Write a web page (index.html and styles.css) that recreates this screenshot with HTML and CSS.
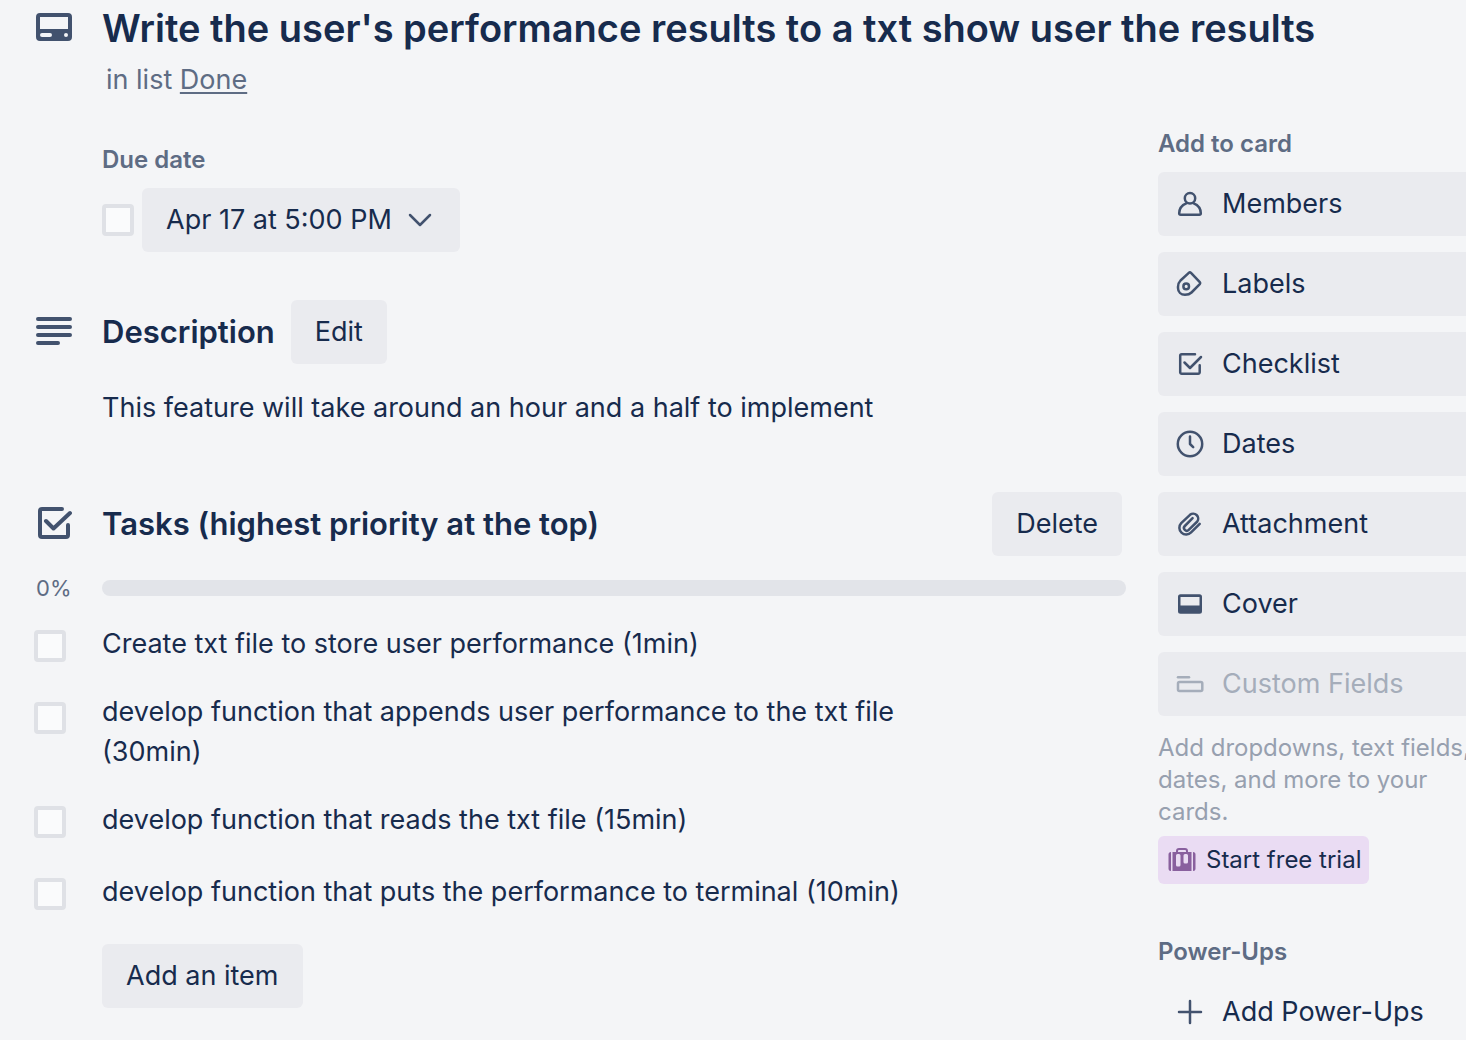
FILE: index.html
```html
<!DOCTYPE html>
<html lang="en">
<head>
<meta charset="utf-8">
<meta name="viewport" content="width=device-width, initial-scale=1">
<title>Write the user's performance results to a txt show user the results</title>
<link rel="stylesheet" href="styles.css">
</head>
<body>
<div class="card">
  <header class="card-header row">
    <svg class="icon-large" viewBox="0 0 36 36" aria-hidden="true">
      <path fill="currentColor" fill-rule="evenodd" d="M4 4h28a4 4 0 0 1 4 4v20a4 4 0 0 1-4 4H4a4 4 0 0 1-4-4V8a4 4 0 0 1 4-4zM4 8v12h28V8zM6 24a2 2 0 0 0 0 4h8a2 2 0 0 0 0-4zM30 24a2 2 0 1 0 0 4a2 2 0 0 0 0-4z"/>
    </svg>
    <div>
      <h1 class="card-title">Write the user's performance results to a txt show user the results</h1>
      <p class="card-list">in list <a href="#done">Done</a></p>
    </div>
  </header>

  <div class="columns">
    <main class="main">
      <section class="due">
        <h2 class="label">Due date</h2>
        <div class="due-row">
          <input class="checkbox" type="checkbox" aria-label="Mark due date complete">
          <button class="button" type="button">Apr 17 at 5:00 PM
            <svg class="chevron" viewBox="0 0 24 24" aria-hidden="true"><path class="stroke" d="M2 7l10 10L22 7"/></svg>
          </button>
        </div>
      </section>

      <section class="description">
        <div class="row row-center">
          <svg class="icon-large" viewBox="0 0 36 36" aria-hidden="true"><path class="stroke thick" d="M2 5h32M2 13h32M2 21h32M2 29h20"/></svg>
          <div class="heading-row">
            <h2 class="heading">Description</h2>
            <button class="button" type="button">Edit</button>
          </div>
        </div>
        <p class="description-text">This feature will take around an hour and a half to implement</p>
      </section>

      <section class="checklist">
        <div class="row row-center">
          <svg class="icon-large" viewBox="0 0 36 36" aria-hidden="true"><path class="stroke thick" d="M26 3H6a2 2 0 0 0-2 2v24a2 2 0 0 0 2 2h24a2 2 0 0 0 2-2V19M10 15l7.500 7.500L34 7"/></svg>
          <div class="heading-row heading-spread">
            <h2 class="heading">Tasks (highest priority at the top)</h2>
            <button class="button" type="button">Delete</button>
          </div>
        </div>
        <div class="row row-center progress">
          <span class="percent">0%</span>
          <div class="progress-bar" role="progressbar" aria-label="Tasks complete" aria-valuenow="0" aria-valuemin="0" aria-valuemax="100"></div>
        </div>
        <ul class="items">
          <li class="item"><input class="checkbox" type="checkbox" id="task-1"><label for="task-1">Create txt file to store user performance (1min)</label></li>
          <li class="item"><input class="checkbox" type="checkbox" id="task-2"><label for="task-2">develop function that appends user performance to the txt file (30min)</label></li>
          <li class="item"><input class="checkbox" type="checkbox" id="task-3"><label for="task-3">develop function that reads the txt file (15min)</label></li>
          <li class="item"><input class="checkbox" type="checkbox" id="task-4"><label for="task-4">develop function that puts the performance to terminal (10min)</label></li>
        </ul>
        <button class="button add-item" type="button">Add an item</button>
      </section>
    </main>

    <aside class="sidebar">
      <h2 class="label">Add to card</h2>
      <div class="actions">
        <button class="action" type="button">
          <svg class="icon" viewBox="0 0 32 32" aria-hidden="true"><circle class="stroke" cx="16" cy="10.300" r="5.200"/><path class="stroke" d="M12.300 15.300C8 17 5.200 20.500 5.200 25.300a1.500 1.500 0 0 0 1.500 1.500h18.600a1.500 1.500 0 0 0 1.500-1.500C26.800 20.500 24 17 19.700 15.300"/></svg>
          Members
        </button>
        <button class="action" type="button">
          <svg class="icon" viewBox="0 0 32 32" aria-hidden="true"><path class="stroke" d="M14.800 4.900L6.500 12.500a9 9 0 0 0-2.500 6.200v1.300C4 24 7 26.800 11 26.800c2.500 0 4.800-.600 6.500-2.300l8.300-8.300a1.500 1.500 0 0 0 0-2L17 4.900a1.600 1.600 0 0 0-2.200 0z"/><circle class="stroke" cx="12.200" cy="18.400" r="2.800"/></svg>
          Labels
        </button>
        <button class="action" type="button">
          <svg class="icon" viewBox="0 0 32 32" aria-hidden="true"><path class="stroke" d="M21 6.300H7.700A1.500 1.500 0 0 0 6.200 7.800v16.500a1.500 1.500 0 0 0 1.500 1.500h16.500a1.500 1.500 0 0 0 1.500-1.500v-7M10.500 14.500l5.500 5.500L27 9"/></svg>
          Checklist
        </button>
        <button class="action" type="button">
          <svg class="icon" viewBox="0 0 32 32" aria-hidden="true"><circle class="stroke" cx="16" cy="16" r="12.200"/><path class="stroke" d="M16 8.500V16l3.200 3.200"/></svg>
          Dates
        </button>
        <button class="action" type="button">
          <svg class="icon" viewBox="0 0 32 32" aria-hidden="true"><path class="stroke" d="M25.700 15.800l-8.600 8.600a6.600 6.600 0 0 1-9.900-9.300l8.800-8.300a5 5 0 0 1 7.300 6.700l-8.600 8.400a2.700 2.700 0 0 1-3.900-3.900l7.800-7.800"/></svg>
          Attachment
        </button>
        <button class="action" type="button">
          <svg class="icon" viewBox="0 0 32 32" aria-hidden="true"><path fill="currentColor" fill-rule="evenodd" d="M6.500 6.300h19A2.500 2.500 0 0 1 28 8.800v14.400a2.500 2.500 0 0 1-2.500 2.500h-19A2.500 2.500 0 0 1 4 23.200V8.800a2.500 2.500 0 0 1 2.500-2.500zM6.500 9v8.500h19V9z"/></svg>
          Cover
        </button>
        <button class="action" type="button" disabled>
          <svg class="icon" viewBox="0 0 32 32" aria-hidden="true"><path class="stroke" d="M4 9.300h11"/><rect class="stroke" x="4" y="14" width="24.300" height="9" rx="1.500"/></svg>
          Custom Fields
        </button>
      </div>
      <p class="hint">Add dropdowns, text fields, dates, and more to your cards.</p>
      <button class="trial" type="button">
        <svg class="trial-icon" viewBox="0 0 28 24" aria-hidden="true">
          <path fill="none" stroke="currentColor" stroke-width="2" d="M9 5V3a2 2 0 0 1 2-2h6a2 2 0 0 1 2 2v2"/>
          <path fill="currentColor" d="M3 4v19a2.500 2.500 0 0 1-2.500-2.500v-14A2.500 2.500 0 0 1 3 4zM25 4v19a2.500 2.500 0 0 0 2.500-2.500v-14A2.500 2.500 0 0 0 25 4z"/>
          <path fill="currentColor" fill-rule="evenodd" d="M4.500 4h19v19h-19zM9.500 6A1.500 1.500 0 0 0 8 7.500V17a1.500 1.500 0 0 0 1.500 1.500h1.500a1.500 1.500 0 0 0 1.500-1.500V7.500A1.500 1.500 0 0 0 11 6zM17 6a1.500 1.500 0 0 0-1.500 1.500V14a1.500 1.500 0 0 0 1.500 1.500h1.500A1.500 1.500 0 0 0 20 14V7.500A1.500 1.500 0 0 0 18.500 6z"/>
        </svg>
        Start free trial
      </button>
      <h2 class="label power-label">Power-Ups</h2>
      <button class="action action-plain" type="button">
        <svg class="icon" viewBox="0 0 32 32" aria-hidden="true"><path class="stroke" d="M16 5v22M5 16h22"/></svg>
        Add Power-Ups
      </button>
    </aside>
  </div>
</div>
</body>
</html>
```
FILE: styles.css
```css
* {
  box-sizing: border-box;
}

body {
  margin: 0;
  background: #f4f5f7;
  color: #172b4d;
  font-family: Inter, "Liberation Sans", sans-serif;
  font-size: 27px;
  line-height: 40px;
  overflow-x: hidden;
}

h1, h2, p, ul {
  margin: 0;
  padding: 0;
}

button {
  font: inherit;
  color: inherit;
  border: 0;
  cursor: pointer;
}

.row {
  display: grid;
  grid-template-columns: 36px minmax(0, 1fr);
  column-gap: 30px;
  padding-left: 36px;
}

.row-center {
  align-items: center;
}

.icon-large {
  width: 36px;
  height: 36px;
  color: #42526e;
}

.stroke {
  fill: none;
  stroke: currentColor;
  stroke-width: 2.5;
  stroke-linecap: round;
  stroke-linejoin: round;
}

.thick {
  stroke-width: 4;
}

.card-header {
  padding-top: 4px;
}

.card-header .icon-large {
  margin-top: 5px;
}

.card-title {
  font-size: 38px;
  font-weight: 600;
  line-height: 48px;
}

.card-list {
  margin-top: 8px;
  padding-left: 4px;
  color: #5e6c84;
}

.card-list a {
  color: inherit;
  text-underline-offset: 3px;
  text-decoration-thickness: 2px;
}

.columns {
  display: grid;
  grid-template-columns: minmax(0, 1fr) 308px;
  column-gap: 32px;
  padding-top: 24px;
}

.label {
  color: #5e6c84;
  font-size: 24px;
  font-weight: 600;
  line-height: 40px;
}

.due {
  padding: 16px 0 0 102px;
}

.due-row {
  display: flex;
  align-items: center;
  gap: 8px;
  margin-top: 8px;
}

.checkbox {
  appearance: none;
  flex: none;
  width: 32px;
  height: 32px;
  margin: 0;
  background: #fafbfc;
  border: 4px solid #dfe1e6;
  border-radius: 4px;
}

.button {
  display: inline-flex;
  align-items: center;
  gap: 16px;
  padding: 12px 24px;
  background: #eaebef;
  border-radius: 6px;
  white-space: nowrap;
}

.chevron {
  width: 24px;
  height: 24px;
  margin-right: 4px;
  color: #42526e;
}

.description {
  margin-top: 48px;
}

.heading-row {
  display: flex;
  align-items: center;
  gap: 16px;
}

.heading-spread {
  justify-content: space-between;
  padding-right: 4px;
}

.heading {
  font-size: 31px;
  font-weight: 600;
  line-height: 40px;
}

.description-text {
  margin-top: 24px;
  padding-left: 102px;
}

.checklist {
  margin-top: 64px;
}

.progress {
  margin-top: 16px;
}

.percent {
  color: #5e6c84;
  font-size: 22px;
  line-height: 32px;
}

.progress-bar {
  height: 16px;
  background: #e2e4e9;
  border-radius: 8px;
}

.items {
  display: flex;
  flex-direction: column;
  gap: 24px;
  margin-top: 16px;
  padding: 0 140px 0 34px;
  list-style: none;
}

.item {
  display: flex;
  align-items: center;
  gap: 36px;
  min-height: 48px;
}

.item .checkbox {
  align-self: flex-start;
  margin-top: 10px;
}

.add-item {
  margin: 28px 0 32px 102px;
}

.actions {
  display: flex;
  flex-direction: column;
  gap: 16px;
  margin-top: 8px;
}

.action {
  display: flex;
  align-items: center;
  gap: 16px;
  width: 100%;
  padding: 12px 16px;
  background: #eaebef;
  border-radius: 6px 0 0 6px;
  text-align: left;
}

.action:disabled {
  color: #a5adba;
  cursor: default;
}

.action-plain {
  margin-top: 8px;
  background: transparent;
}

.icon {
  width: 32px;
  height: 32px;
  color: #42526e;
}

.action:disabled .icon {
  color: inherit;
}

.hint {
  margin: 16px -16px 0 0;
  color: #97a0af;
  font-size: 24px;
  line-height: 32px;
}

.trial {
  display: inline-flex;
  align-items: center;
  gap: 10px;
  margin-top: 8px;
  padding: 8px 8px 8px 10px;
  background: #eadcf3;
  border-radius: 6px;
  font-size: 24px;
  line-height: 32px;
  white-space: nowrap;
}

.trial-icon {
  width: 28px;
  height: 24px;
  color: #89609e;
}

.power-label {
  margin-top: 48px;
}
```
